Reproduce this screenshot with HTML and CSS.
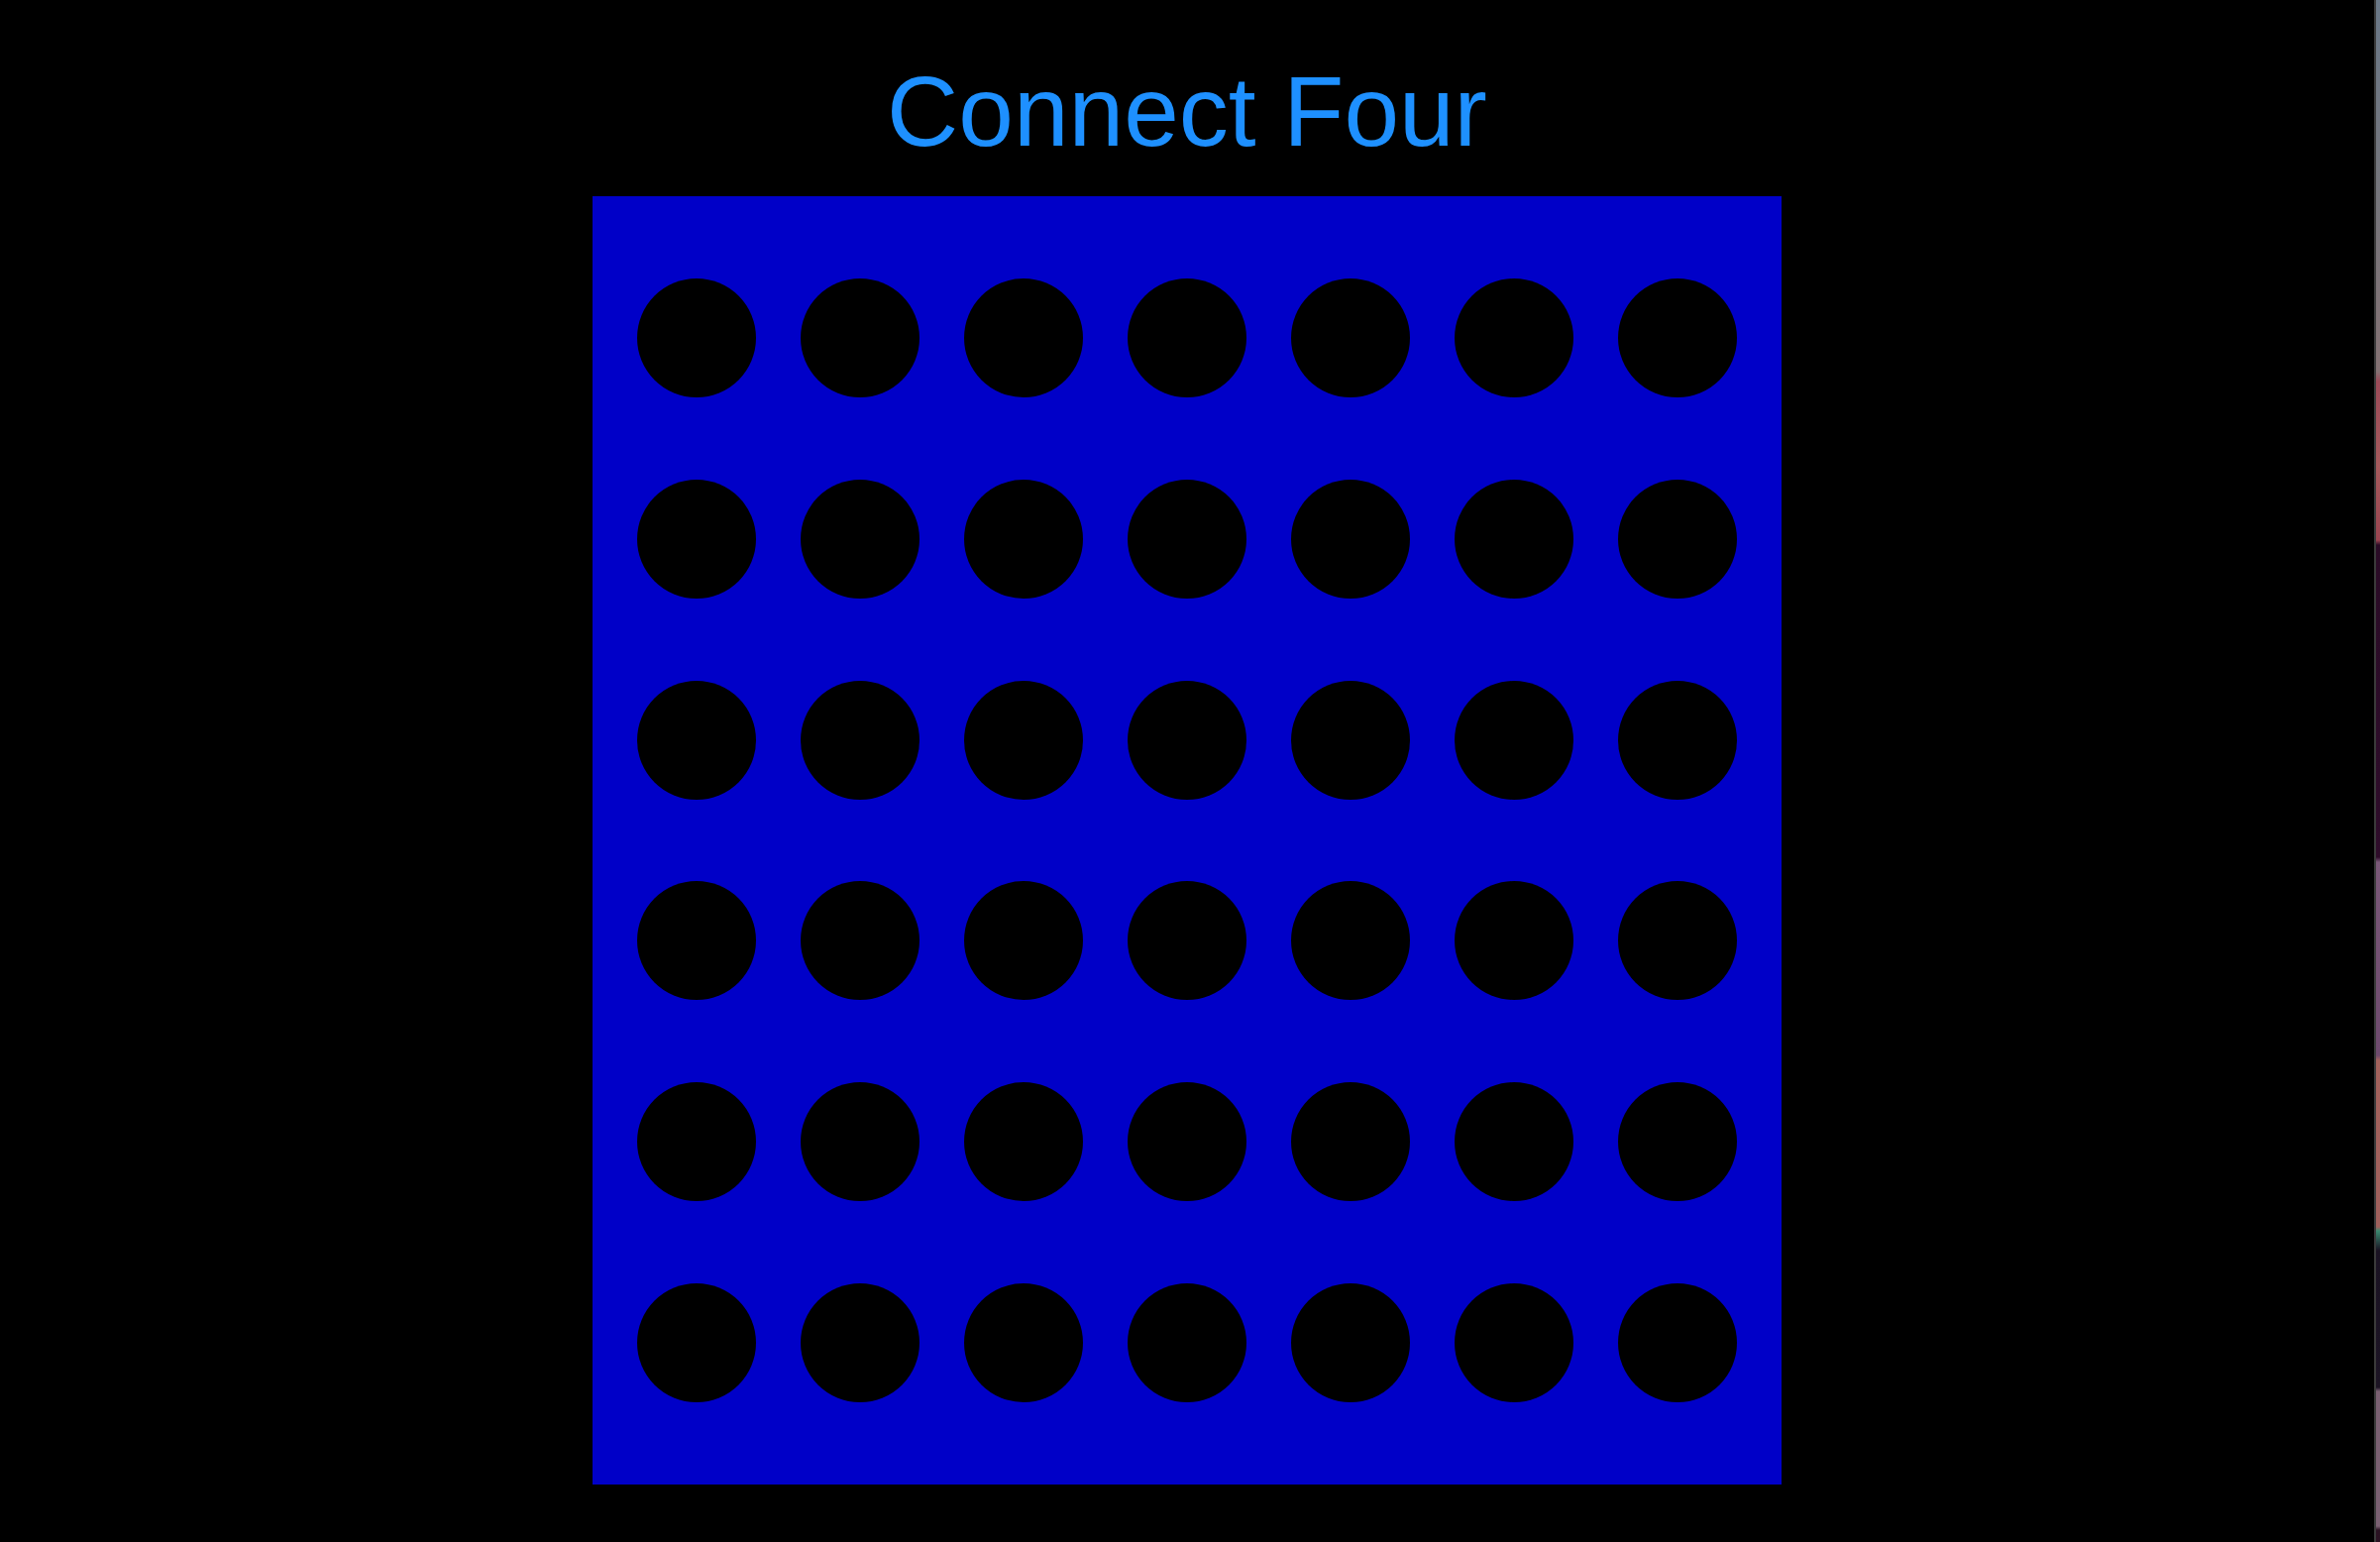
FILE: index.html
```html
<!DOCTYPE html>
<html lang="en">
<head>
<meta charset="utf-8">
<title>Connect Four</title>
<link rel="stylesheet" href="styles.css">
</head>
<body>
<main class="game">
  <h1 class="title">Connect Four</h1>
  <div class="board">
    <div class="cell"></div><div class="cell"></div><div class="cell"></div><div class="cell"></div><div class="cell"></div><div class="cell"></div><div class="cell"></div>
    <div class="cell"></div><div class="cell"></div><div class="cell"></div><div class="cell"></div><div class="cell"></div><div class="cell"></div><div class="cell"></div>
    <div class="cell"></div><div class="cell"></div><div class="cell"></div><div class="cell"></div><div class="cell"></div><div class="cell"></div><div class="cell"></div>
    <div class="cell"></div><div class="cell"></div><div class="cell"></div><div class="cell"></div><div class="cell"></div><div class="cell"></div><div class="cell"></div>
    <div class="cell"></div><div class="cell"></div><div class="cell"></div><div class="cell"></div><div class="cell"></div><div class="cell"></div><div class="cell"></div>
    <div class="cell"></div><div class="cell"></div><div class="cell"></div><div class="cell"></div><div class="cell"></div><div class="cell"></div><div class="cell"></div>
  </div>
</main>
<div class="edge"></div>
</body>
</html>
```

FILE: styles.css
```css
html, body {
  margin: 0;
  padding: 0;
  background: #000;
  height: 100%;
  overflow: hidden;
}
body {
  display: flex;
  font-family: "Liberation Sans", Arial, sans-serif;
}
.game {
  flex: 1;
  display: flex;
  flex-direction: column;
  align-items: center;
}
.title {
  margin: 55px 0 28px;
  font-size: 100px;
  line-height: 115px;
  font-weight: normal;
  color: #1e90ff;
}
.board {
  width: 1200px;
  height: 1300px;
  background: #0000c8;
  display: grid;
  grid-template-columns: repeat(7, 120px);
  grid-template-rows: repeat(6, 120px);
  column-gap: 45px;
  justify-content: center;
  align-content: space-evenly;
}
.cell {
  width: 120px;
  height: 120px;
  border-radius: 50%;
  background: #000;
}
.edge {
  width: 4px;
  border-left: 2px solid #3a3a3a;
  background: linear-gradient(to bottom,
    #6a7888 0px, #76767c 200px, #857274 375px,
    #9c4a58 385px, #a65a5c 470px, #9a4450 545px,
    #2a0b26 550px, #2e0c2a 865px,
    #7a5878 870px, #6e4a6e 1065px,
    #a4625c 1070px, #a0605c 1238px,
    #3a8a70 1242px, #1a1222 1262px, #1c1424 1400px,
    #7a6072 1404px, #7a6072 1540px,
    #2a1222 1544px, #2a1222 1556px);
}
```
